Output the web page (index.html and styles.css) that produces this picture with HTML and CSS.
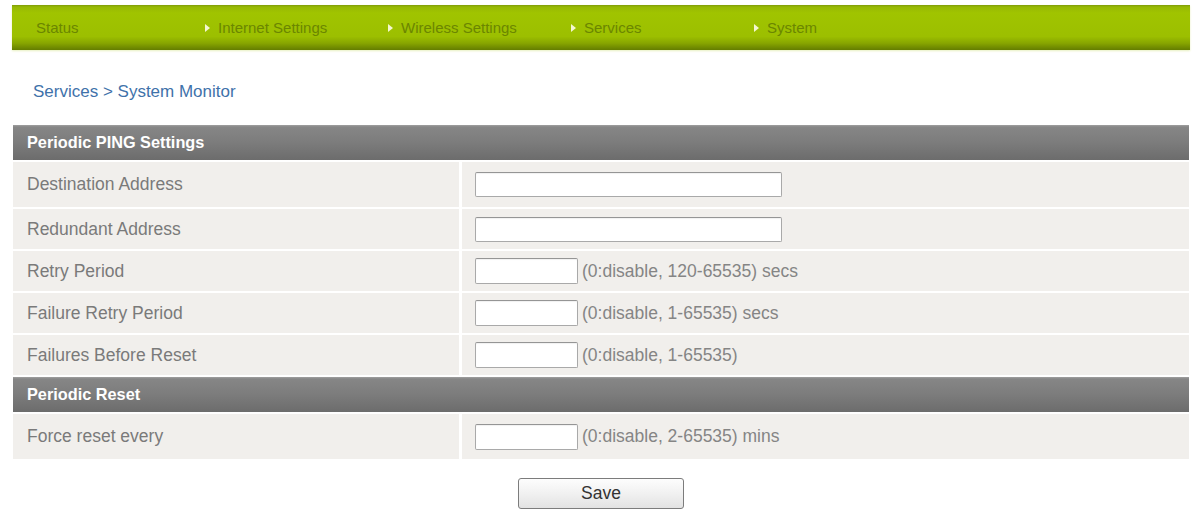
FILE: index.html
```html
<!DOCTYPE html>
<html lang="en">
<head>
  <meta charset="UTF-8">
  <meta name="viewport" content="width=device-width, initial-scale=1.0">
  <title>System Monitor</title>
  <link rel="stylesheet" href="styles.css">
</head>
<body>

  <div class="page">
    <ul class="menu">
      <li class="first">Status</li>
      <li><span class="arrow"></span>Internet Settings</li>
      <li><span class="arrow"></span>Wireless Settings</li>
      <li><span class="arrow"></span>Services</li>
      <li><span class="arrow"></span>System</li>
    </ul>

    <p class="crumb">Services &gt; System Monitor</p>

    <form class="settings">
      <table>
        <tr><th colspan="2">Periodic PING Settings</th></tr>
        <tr class="tall">
          <td class="label">Destination Address</td>
          <td><input type="text" class="wide"></td>
        </tr>
        <tr>
          <td class="label">Redundant Address</td>
          <td><input type="text" class="wide"></td>
        </tr>
        <tr>
          <td class="label">Retry Period</td>
          <td><input type="text" class="short"><span class="hint">(0:disable, 120-65535) secs</span></td>
        </tr>
        <tr>
          <td class="label">Failure Retry Period</td>
          <td><input type="text" class="short"><span class="hint">(0:disable, 1-65535) secs</span></td>
        </tr>
        <tr>
          <td class="label">Failures Before Reset</td>
          <td><input type="text" class="short"><span class="hint">(0:disable, 1-65535)</span></td>
        </tr>
        <tr><th colspan="2">Periodic Reset</th></tr>
        <tr class="tall">
          <td class="label">Force reset every</td>
          <td><input type="text" class="short"><span class="hint">(0:disable, 2-65535) mins</span></td>
        </tr>
      </table>

      <div class="actions">
        <button type="button">Save</button>
      </div>
    </form>
  </div>

</body>
</html>
```

FILE: styles.css
```css
body {
  font-family: "Liberation Sans", Arial, sans-serif;
  background-color: #fff;
  margin: 0;
}

.page {
  padding: 5px 0 0 12px;
  width: 1178px;
}

/* barra verde do topo */
.menu {
  list-style: none;
  margin: 0;
  padding: 0 0 0 24px;
  height: 45px;
  display: flex;
  align-items: center;
  background: linear-gradient(to bottom, #7f9a08 0, #97b904 2px, #a0c400 8px, #9cbf00 70%, #87a500 85%, #647d00 100%);
  box-shadow: 0 1px 2px #e8f0c0;
}

.menu li {
  width: 183px;
  font-size: 15px;
  color: #6b8600;
  display: flex;
  align-items: center;
}

.menu li.first {
  width: 169px;
}

.arrow {
  width: 0;
  height: 0;
  border-top: 4px solid transparent;
  border-bottom: 4px solid transparent;
  border-left: 5px solid #f4f7d0;
  margin-right: 8px;
}

.crumb {
  margin: 32px 0 0 21px;
  font-size: 17px;
  color: #3f72aa;
  height: 20px;
}

.settings table {
  margin: 21px 0 0 -2px;
  width: 1182px;
  border-collapse: separate;
  border-spacing: 3px 2px;
}

.settings th {
  height: 35px;
  padding: 0 0 0 14px;
  text-align: left;
  font-size: 16.3px;
  color: #fff;
  background: linear-gradient(to bottom, #a0a0a0 0, #868686 2px, #7c7c7c 50%, #6c6c6c 100%);
}

.settings td {
  height: 40px;
  padding: 0 0 0 13px;
  background-color: #f1efec;
  font-size: 17.5px;
  color: #7a7a7a;
}

.settings tr.tall td {
  height: 45px;
}

.settings td.label {
  width: 432px;
  padding-left: 14px;
}

input {
  border: 1px solid #a9a9a9;
  border-top-color: #959595;
  border-radius: 2px;
  background-color: #fff;
  box-shadow: inset 0 1px 1px rgba(0, 0, 0, 0.06);
  height: 25px;
  box-sizing: border-box;
  vertical-align: middle;
  padding: 0 4px;
}

input.wide {
  width: 307px;
}

input.short {
  width: 103px;
  height: 26px;
}

.hint {
  margin-left: 4px;
  vertical-align: middle;
  color: #858585;
}

.actions {
  text-align: center;
  margin-top: 17px;
}

button {
  width: 166px;
  height: 31px;
  font-family: "Liberation Sans", Arial, sans-serif;
  font-size: 17.5px;
  color: #333;
  background: linear-gradient(to bottom, #fdfdfd 0, #f1f1f1 50%, #e2e2e2 100%);
  border: 1px solid #7c7c7c;
  border-radius: 3px;
}
```
